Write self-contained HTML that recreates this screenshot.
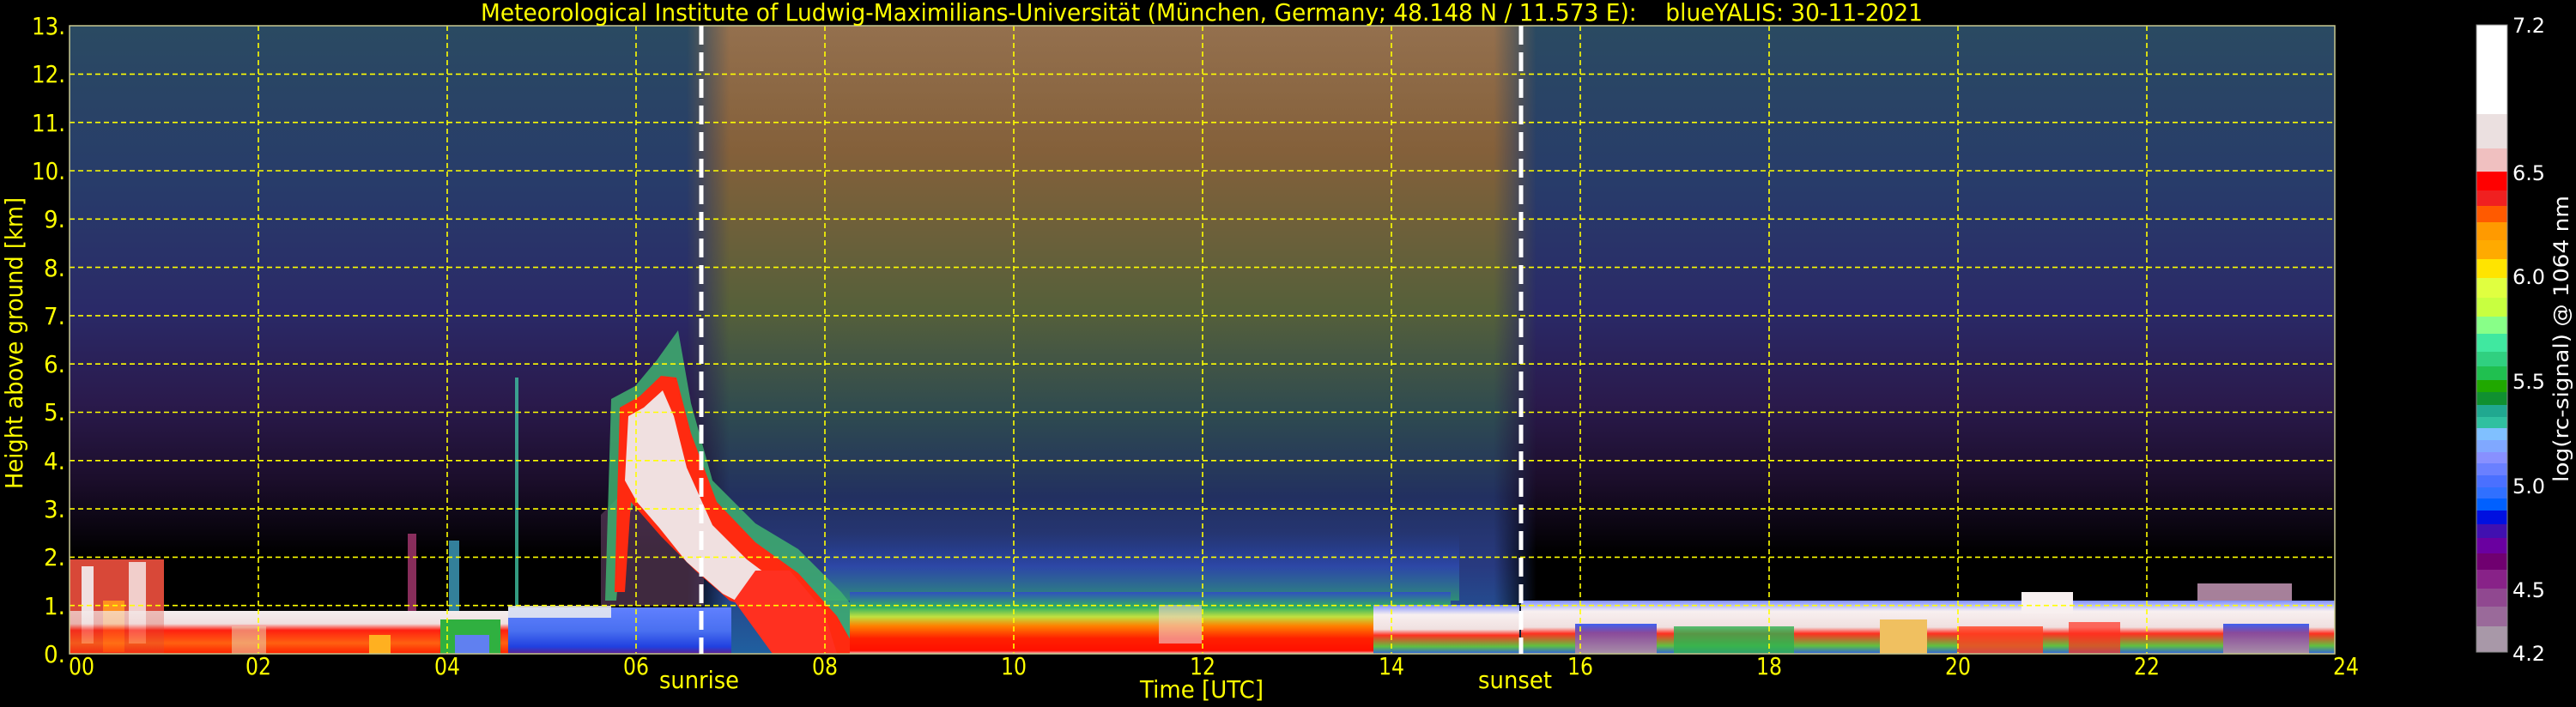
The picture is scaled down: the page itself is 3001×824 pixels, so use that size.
<!DOCTYPE html>
<html><head><meta charset="utf-8"><style>
html,body{margin:0;padding:0;background:#000;}
svg{display:block;}
text{font-family:"DejaVu Sans","Liberation Sans",sans-serif;white-space:pre;}
</style></head><body>
<svg width="3001" height="824" viewBox="0 0 3001 824" xmlns="http://www.w3.org/2000/svg" xml:space="preserve">
<defs>
<linearGradient id="night" x1="0" y1="0" x2="0" y2="1">
<stop offset="0" stop-color="#2a4a62"/>
<stop offset="0.25" stop-color="#283c6a"/>
<stop offset="0.45" stop-color="#2a2a68"/>
<stop offset="0.6" stop-color="#2a1a4c"/>
<stop offset="0.72" stop-color="#1c0e2c"/>
<stop offset="0.8" stop-color="#0a0510"/>
<stop offset="0.84" stop-color="#000"/>
<stop offset="1" stop-color="#000"/>
</linearGradient>
<linearGradient id="day" x1="0" y1="0" x2="0" y2="1">
<stop offset="0" stop-color="#94704e"/>
<stop offset="0.2" stop-color="#84603a"/>
<stop offset="0.45" stop-color="#56603a"/>
<stop offset="0.62" stop-color="#2e4a50"/>
<stop offset="0.75" stop-color="#223060"/>
<stop offset="0.86" stop-color="#283a80"/>
<stop offset="1" stop-color="#2060a0"/>
</linearGradient>
<linearGradient id="dayfade" x1="0" y1="0" x2="1" y2="0">
<stop offset="0" stop-color="#fff" stop-opacity="0"/>
<stop offset="0.05" stop-color="#fff" stop-opacity="1"/>
<stop offset="0.95" stop-color="#fff" stop-opacity="1"/>
<stop offset="1" stop-color="#fff" stop-opacity="0"/>
</linearGradient>
<mask id="dm"><rect x="800" y="30" width="990" height="732" fill="url(#dayfade)"/></mask>
<linearGradient id="bl" x1="0" y1="0" x2="0" y2="1">
<stop offset="0" stop-color="#f4eeee"/>
<stop offset="0.3" stop-color="#f0e0e0"/>
<stop offset="0.45" stop-color="#ff2010"/>
<stop offset="0.75" stop-color="#ff6010"/>
<stop offset="1" stop-color="#ff2000"/>
</linearGradient>
<linearGradient id="blue" x1="0" y1="0" x2="0" y2="1">
<stop offset="0" stop-color="#6080ff"/>
<stop offset="0.5" stop-color="#4a70f0"/>
<stop offset="0.85" stop-color="#2040e0"/>
<stop offset="1" stop-color="#602090"/>
</linearGradient>
<linearGradient id="daybl" x1="0" y1="0" x2="0" y2="1">
<stop offset="0" stop-color="#3050c0"/>
<stop offset="0.25" stop-color="#30b060"/>
<stop offset="0.4" stop-color="#c0e040"/>
<stop offset="0.55" stop-color="#ff8000"/>
<stop offset="0.75" stop-color="#ff2000"/>
<stop offset="0.95" stop-color="#ff1000"/>
<stop offset="1" stop-color="#f0d0d0"/>
</linearGradient>
<linearGradient id="eve" x1="0" y1="0" x2="0" y2="1">
<stop offset="0" stop-color="#8090ff"/>
<stop offset="0.2" stop-color="#f8f0f0"/>
<stop offset="0.5" stop-color="#f0e0e0"/>
<stop offset="0.62" stop-color="#ff3020"/>
<stop offset="0.85" stop-color="#60c040"/>
<stop offset="1" stop-color="#3060e0"/>
</linearGradient>
<linearGradient id="purp" x1="0" y1="0" x2="0" y2="1">
<stop offset="0" stop-color="#4060f0"/>
<stop offset="0.3" stop-color="#8a4a9a"/>
<stop offset="1" stop-color="#a890a8"/>
</linearGradient>
<linearGradient id="dayhaze" x1="0" y1="0" x2="0" y2="1">
<stop offset="0" stop-color="#2040a0" stop-opacity="0"/>
<stop offset="0.5" stop-color="#3050c0" stop-opacity="0.6"/>
<stop offset="1" stop-color="#30a070" stop-opacity="0.8"/>
</linearGradient>
</defs>

<rect x="81" y="30" width="2639" height="732" fill="url(#night)"/>
<rect x="800" y="30" width="990" height="732" fill="url(#day)" mask="url(#dm)"/>

<rect x="81" y="652" width="110" height="110" fill="#d84838"/>
<rect x="95" y="660" width="14" height="90" fill="#f0e0e0"/>
<rect x="150" y="655" width="20" height="95" fill="#f8f0f0" opacity="0.8"/>
<rect x="120" y="700" width="25" height="60" fill="#ff9020"/>
<rect x="191" y="712" width="420" height="50" fill="url(#bl)"/>
<rect x="81" y="712" width="110" height="50" fill="url(#bl)" opacity="0.7"/>
<rect x="270" y="730" width="40" height="32" fill="#e8e0c0" opacity="0.5"/>
<rect x="430" y="740" width="25" height="22" fill="#ffb020"/>
<rect x="513" y="722" width="70" height="40" fill="#30b040"/>
<rect x="530" y="740" width="40" height="22" fill="#6080f0"/>
<rect x="600" y="725" width="20" height="37" fill="#6080ff"/>
<rect x="620" y="712" width="30" height="50" fill="#ff3020"/>
<rect x="475" y="622" width="10" height="90" fill="#c04080" opacity="0.7"/>
<rect x="523" y="630" width="12" height="82" fill="#40a0c0" opacity="0.8"/>
<rect x="600" y="440" width="4" height="270" fill="#40c0a0" opacity="0.8"/>
<polygon points="700,600 740,560 780,600 820,640 820,706 700,706" fill="#5a3a5a" opacity="0.7"/>
<rect x="592" y="708" width="260" height="54" fill="url(#blue)"/>
<rect x="592" y="706" width="120" height="14" fill="#f0f0f0" opacity="0.85"/>
<rect x="960" y="620" width="740" height="80" fill="url(#dayhaze)"/>
<polygon points="705,700 712,465 740,450 765,420 790,385 805,470 830,560 880,610 930,640 980,690 1020,740 1030,762 960,762 900,705 860,690 820,650 780,610 745,570 725,620 718,700" fill="#40b070" opacity="0.85"/>
<polygon points="716,690 722,475 745,462 770,438 788,440 805,505 835,585 880,632 930,668 975,718 1000,762 965,762 905,718 850,700 810,665 770,625 735,585 728,690" fill="#ff2a10"/>
<polygon points="728,560 732,485 750,475 772,455 785,485 800,545 830,612 870,652 910,682 945,722 960,760 935,760 892,718 842,692 800,655 768,615 742,585" fill="#f0e0e0"/>
<polygon points="855,700 880,665 920,665 960,712 975,762 900,762" fill="#ff3020"/>
<rect x="990" y="690" width="700" height="72" fill="url(#daybl)"/>
<rect x="1350" y="705" width="50" height="45" fill="#f0d0d0" opacity="0.6"/>
<rect x="1600" y="705" width="170" height="57" fill="url(#eve)"/>
<rect x="1772" y="700" width="948" height="62" fill="url(#eve)"/>
<rect x="1835" y="727" width="95" height="35" fill="url(#purp)"/>
<rect x="2190" y="722" width="55" height="40" fill="#f0c060"/>
<rect x="2410" y="725" width="60" height="37" fill="#ff3020" opacity="0.7"/>
<rect x="2590" y="727" width="100" height="35" fill="url(#purp)"/>
<rect x="1950" y="730" width="140" height="32" fill="#30b050" opacity="0.8"/>
<rect x="2280" y="730" width="100" height="32" fill="#ff4020" opacity="0.8"/>
<rect x="2355" y="690" width="60" height="25" fill="#f8f0f0"/>
<rect x="2560" y="680" width="110" height="20" fill="#d0a0c0" opacity="0.8"/>

<g stroke="#ffff00" stroke-width="1.6" stroke-dasharray="6,4" fill="none">
<path d="M81 705.7H2720M81 649.4H2720M81 593.1H2720M81 536.8H2720M81 480.5H2720M81 424.2H2720M81 367.9H2720M81 311.6H2720M81 255.3H2720M81 199H2720M81 142.7H2720M81 86.4H2720"/>
<path d="M301 30V762M521 30V762M741 30V762M961 30V762M1181 30V762M1401 30V762M1621 30V762M1841 30V762M2061 30V762M2281 30V762M2501 30V762"/>
</g>
<rect x="81" y="30" width="2639" height="732" fill="none" stroke="#c8c890" stroke-width="1.5"/>
<g stroke="#fff" stroke-width="5" stroke-dasharray="22,9">
<path d="M817 30V762M1772 30V762"/>
</g>

<text x="560" y="24" font-size="28" fill="#ffff00" textLength="1680" lengthAdjust="spacingAndGlyphs">Meteorological Institute of Ludwig-Maximilians-Universität (München, Germany; 48.148 N / 11.573 E):    blueYALIS: 30-11-2021</text>

<g font-size="28" fill="#ffff00" text-anchor="end">
<text x="76" y="772" textLength="25" lengthAdjust="spacingAndGlyphs">0.</text>
<text x="76" y="716" textLength="25" lengthAdjust="spacingAndGlyphs">1.</text>
<text x="76" y="659" textLength="25" lengthAdjust="spacingAndGlyphs">2.</text>
<text x="76" y="603" textLength="25" lengthAdjust="spacingAndGlyphs">3.</text>
<text x="76" y="547" textLength="25" lengthAdjust="spacingAndGlyphs">4.</text>
<text x="76" y="490" textLength="25" lengthAdjust="spacingAndGlyphs">5.</text>
<text x="76" y="434" textLength="25" lengthAdjust="spacingAndGlyphs">6.</text>
<text x="76" y="378" textLength="25" lengthAdjust="spacingAndGlyphs">7.</text>
<text x="76" y="322" textLength="25" lengthAdjust="spacingAndGlyphs">8.</text>
<text x="76" y="265" textLength="25" lengthAdjust="spacingAndGlyphs">9.</text>
<text x="76" y="209" textLength="39" lengthAdjust="spacingAndGlyphs">10.</text>
<text x="76" y="153" textLength="39" lengthAdjust="spacingAndGlyphs">11.</text>
<text x="76" y="96" textLength="39" lengthAdjust="spacingAndGlyphs">12.</text>
<text x="76" y="40" textLength="39" lengthAdjust="spacingAndGlyphs">13.</text>
</g>
<text transform="translate(26,400) rotate(-90)" font-size="28" fill="#ffff00" text-anchor="middle" textLength="340" lengthAdjust="spacingAndGlyphs">Height above ground [km]</text>

<g font-size="28" fill="#ffff00">
<text x="80" y="786" textLength="30" lengthAdjust="spacingAndGlyphs">00</text>
<text x="286" y="786" textLength="30" lengthAdjust="spacingAndGlyphs">02</text>
<text x="506" y="786" textLength="30" lengthAdjust="spacingAndGlyphs">04</text>
<text x="726" y="786" textLength="30" lengthAdjust="spacingAndGlyphs">06</text>
<text x="946" y="786" textLength="30" lengthAdjust="spacingAndGlyphs">08</text>
<text x="1166" y="786" textLength="30" lengthAdjust="spacingAndGlyphs">10</text>
<text x="1386" y="786" textLength="30" lengthAdjust="spacingAndGlyphs">12</text>
<text x="1606" y="786" textLength="30" lengthAdjust="spacingAndGlyphs">14</text>
<text x="1826" y="786" textLength="30" lengthAdjust="spacingAndGlyphs">16</text>
<text x="2046" y="786" textLength="30" lengthAdjust="spacingAndGlyphs">18</text>
<text x="2266" y="786" textLength="30" lengthAdjust="spacingAndGlyphs">20</text>
<text x="2486" y="786" textLength="30" lengthAdjust="spacingAndGlyphs">22</text>
<text x="2718" y="786" textLength="30" lengthAdjust="spacingAndGlyphs">24</text>
<text x="768" y="802" textLength="93" lengthAdjust="spacingAndGlyphs">sunrise</text>
<text x="1722" y="802" textLength="86" lengthAdjust="spacingAndGlyphs">sunset</text>
<text x="1328" y="813" textLength="144" lengthAdjust="spacingAndGlyphs">Time [UTC]</text>
</g>

<g>
<rect x="2885" y="29" width="36" height="104" fill="#ffffff"/>
<rect x="2885" y="133" width="36" height="40" fill="#ebe0e0"/>
<rect x="2885" y="173" width="36" height="27" fill="#f0c0c0"/>
<rect x="2885" y="200" width="36" height="22" fill="#ff0000"/>
<rect x="2885" y="222" width="36" height="18" fill="#f02020"/>
<rect x="2885" y="240" width="36" height="19" fill="#ff5a00"/>
<rect x="2885" y="259" width="36" height="21" fill="#ff9a00"/>
<rect x="2885" y="280" width="36" height="22" fill="#ffaa00"/>
<rect x="2885" y="302" width="36" height="22" fill="#ffe400"/>
<rect x="2885" y="324" width="36" height="23" fill="#e0ff40"/>
<rect x="2885" y="347" width="36" height="22" fill="#c8ff40"/>
<rect x="2885" y="369" width="36" height="20" fill="#88ff88"/>
<rect x="2885" y="389" width="36" height="21" fill="#40e8a0"/>
<rect x="2885" y="410" width="36" height="17" fill="#30d080"/>
<rect x="2885" y="427" width="36" height="16" fill="#20c050"/>
<rect x="2885" y="443" width="36" height="14" fill="#20a800"/>
<rect x="2885" y="457" width="36" height="15" fill="#109030"/>
<rect x="2885" y="472" width="36" height="14" fill="#20a890"/>
<rect x="2885" y="486" width="36" height="13" fill="#30c0a0"/>
<rect x="2885" y="499" width="36" height="14" fill="#80c0ff"/>
<rect x="2885" y="513" width="36" height="14" fill="#80a8ff"/>
<rect x="2885" y="527" width="36" height="13" fill="#8890ff"/>
<rect x="2885" y="540" width="36" height="14" fill="#6a80ff"/>
<rect x="2885" y="554" width="36" height="14" fill="#4a70ff"/>
<rect x="2885" y="568" width="36" height="13" fill="#3070ff"/>
<rect x="2885" y="581" width="36" height="14" fill="#0060ff"/>
<rect x="2885" y="595" width="36" height="16" fill="#0010e0"/>
<rect x="2885" y="611" width="36" height="16" fill="#4010b0"/>
<rect x="2885" y="627" width="36" height="18" fill="#6a00a0"/>
<rect x="2885" y="645" width="36" height="19" fill="#700070"/>
<rect x="2885" y="664" width="36" height="22" fill="#882288"/>
<rect x="2885" y="686" width="36" height="21" fill="#904890"/>
<rect x="2885" y="707" width="36" height="23" fill="#9a6a9a"/>
<rect x="2885" y="730" width="36" height="30" fill="#a898a8"/>
<rect x="2885" y="29" width="36" height="731" fill="none" stroke="#888" stroke-width="1"/>
</g>
<g font-size="24" fill="#ffffff">
<text x="2927" y="38" textLength="38" lengthAdjust="spacingAndGlyphs">7.2</text>
<text x="2927" y="210" textLength="38" lengthAdjust="spacingAndGlyphs">6.5</text>
<text x="2927" y="331" textLength="38" lengthAdjust="spacingAndGlyphs">6.0</text>
<text x="2927" y="453" textLength="38" lengthAdjust="spacingAndGlyphs">5.5</text>
<text x="2927" y="575" textLength="38" lengthAdjust="spacingAndGlyphs">5.0</text>
<text x="2927" y="696" textLength="38" lengthAdjust="spacingAndGlyphs">4.5</text>
<text x="2927" y="770" textLength="38" lengthAdjust="spacingAndGlyphs">4.2</text>
</g>
<text transform="translate(2992,395) rotate(-90)" font-size="24" fill="#ffffff" text-anchor="middle" textLength="334" lengthAdjust="spacingAndGlyphs">log(rc-signal) @ 1064 nm</text>
</svg>
</body></html>
